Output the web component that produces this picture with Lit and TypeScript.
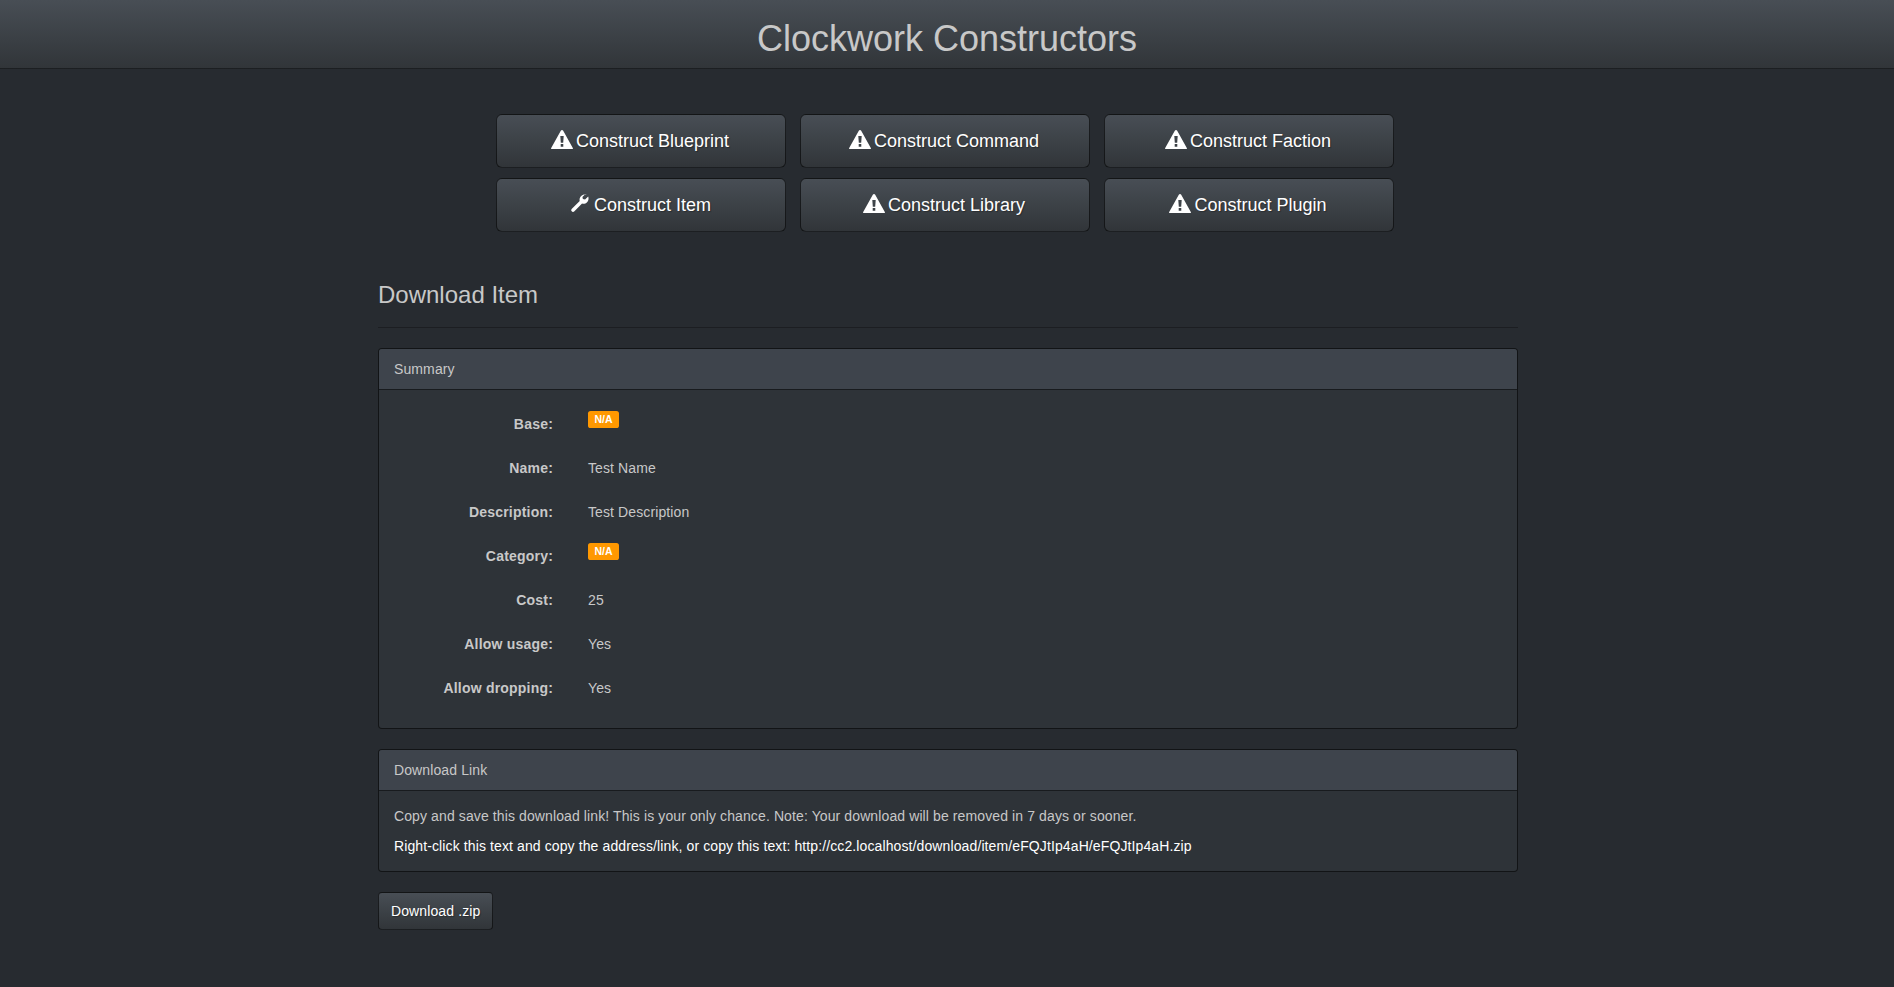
import { LitElement, html, css, svg } from "lit";
import { customElement } from "lit/decorators.js";

const warn = svg`<path fill-rule="evenodd" d="M11 0 C11.5 0 11.9 0.3 12.2 0.8 L21.8 18 C22.1 18.5 21.9 19 21.3 19 L0.7 19 C0.1 19 -0.1 18.5 0.2 18 L9.8 0.8 C10.1 0.3 10.5 0 11 0 Z M9.3 6 L9.8 12.8 L12.2 12.8 L12.7 6 Z M9.7 14 L9.7 16.8 L12.3 16.8 L12.3 14 Z"/>`;
const wrench = svg`<path d="M17.6 1.1 C15.4 0.2 12.8 0.7 11.1 2.4 C9.6 3.9 9.2 6 9.7 7.9 L1 16.4 C0 17.4 0 18.5 0.8 19.3 C1.7 20.2 2.9 20.1 3.8 19.2 L12.3 10.6 C14.2 11.1 16.4 10.6 17.8 9.1 C19.5 7.4 19.9 4.9 19.1 2.8 L15.6 6.2 L13.2 5.6 L12.7 3.2 L16.1 0 Z"/>`;

const nav = [
  ["warn", "Construct Blueprint"],
  ["warn", "Construct Command"],
  ["warn", "Construct Faction"],
  ["wrench", "Construct Item"],
  ["warn", "Construct Library"],
  ["warn", "Construct Plugin"],
];

const rows: [string, string | null][] = [
  ["Base:", null],
  ["Name:", "Test Name"],
  ["Description:", "Test Description"],
  ["Category:", null],
  ["Cost:", "25"],
  ["Allow usage:", "Yes"],
  ["Allow dropping:", "Yes"],
];

@customElement("app-root")
export class AppRoot extends LitElement {
  static styles = css`
    :host {
      display: block;
      min-height: 987px;
      background: #272b30;
      color: #c8c8c8;
      font-family: "Liberation Sans", Arial, sans-serif;
      font-size: 14px;
      line-height: 20px;
    }
    .top {
      height: 69px;
      box-sizing: border-box;
      padding-top: 10px;
      border-bottom: 1px solid rgba(0, 0, 0, 0.6);
      background: linear-gradient(#484e55, #3a3f44 60%, #313539);
      display: flex;
      align-items: center;
      justify-content: center;
      font-size: 36px;
      line-height: 40px;
      color: #c8c8c8;
    }
    .nav {
      display: grid;
      grid-template-columns: repeat(3, 290px);
      column-gap: 14px;
      row-gap: 10px;
      justify-content: start;
      padding: 45px 0 0 496px;
    }
    .btn {
      display: flex;
      align-items: center;
      justify-content: center;
      box-sizing: border-box;
      border: 1px solid rgba(0, 0, 0, 0.6);
      border-radius: 6px;
      background: linear-gradient(#484e55, #3a3f44 60%, #313539);
      color: #fff;
      text-shadow: 1px 1px 1px rgba(0, 0, 0, 0.3);
      text-decoration: none;
    }
    .nav .btn {
      height: 54px;
      font-size: 18px;
      line-height: 24px;
      gap: 3px;
    }
    .nav .btn.warn { padding-right: 2px; }
    .nav svg { width: 22px; height: 19px; fill: #fff; position: relative; top: -2px; }
    .nav svg.wr { width: 18px; height: 18px; margin-right: 2px; }
    .content {
      width: 1140px;
      margin: 0 0 0 378px;
      letter-spacing: 0.11px;
    }
    h2 {
      margin: 0;
      padding: 49px 0 19px;
      font-size: 24px;
      line-height: 27px;
      font-weight: 400;
      letter-spacing: 0;
      color: #c8c8c8;
      border-bottom: 1px solid #1c1e22;
    }
    .panel {
      border: 1px solid rgba(0, 0, 0, 0.6);
      border-radius: 4px;
      background: #2e3338;
      margin-top: 20px;
      overflow: hidden;
    }
    .head {
      height: 41px;
      box-sizing: border-box;
      padding: 10px 15px;
      background: #3e444c;
      border-bottom: 1px solid rgba(0, 0, 0, 0.6);
    }
    .form {
      display: flex;
      flex-direction: column;
      gap: 10px;
      padding: 17px 15px 23px;
    }
    .row {
      display: grid;
      grid-template-columns: 159px 1fr;
      column-gap: 35px;
      height: 34px;
      padding-top: 7px;
      box-sizing: border-box;
    }
    .row b { text-align: right; letter-spacing: 0.2px; }
    .label {
      display: inline-block;
      background: #ff9800;
      color: #fff;
      font-size: 10.5px;
      font-weight: 700;
      line-height: 11px;
      letter-spacing: 0;
      padding: 3px 6.5px;
      border-radius: 2.6px;
      position: relative;
      top: -6px;
    }
    .text { padding: 15px; }
    .text p { margin: 0 0 10px; }
    .text p:last-child { margin: 0; }
    .text a { color: #fff; text-decoration: none; }
    .dl {
      display: inline-flex;
      height: 38px;
      padding: 0 12px;
      margin-top: 20px;
      border-radius: 4px;
    }
  `;

  render() {
    return html`
      <div class="top"><span>Clockwork Constructors</span></div>
      <div class="nav">
        ${nav.map(
          ([icon, label]) => html`<a class="btn ${icon}" href="#">
            ${icon === "warn"
              ? html`<svg viewBox="0 0 22 19">${warn}</svg>`
              : html`<svg class="wr" viewBox="0 0 20 20">${wrench}</svg>`}
            ${label}
          </a>`
        )}
      </div>
      <div class="content">
        <h2>Download Item</h2>
        <div class="panel">
          <div class="head">Summary</div>
          <div class="form">
            ${rows.map(
              ([k, v]) => html`<div class="row">
                <b>${k}</b>
                <div>${v === null ? html`<span class="label">N/A</span>` : v}</div>
              </div>`
            )}
          </div>
        </div>
        <div class="panel">
          <div class="head">Download Link</div>
          <div class="text">
            <p>Copy and save this download link! This is your only chance. Note: Your download will be removed in 7 days or sooner.</p>
            <p><a href="#">Right-click this text and copy the address/link, or copy this text: http://cc2.localhost/download/item/eFQJtIp4aH/eFQJtIp4aH.zip</a></p>
          </div>
        </div>
        <a class="btn dl" href="#">Download .zip</a>
      </div>
    `;
  }
}
